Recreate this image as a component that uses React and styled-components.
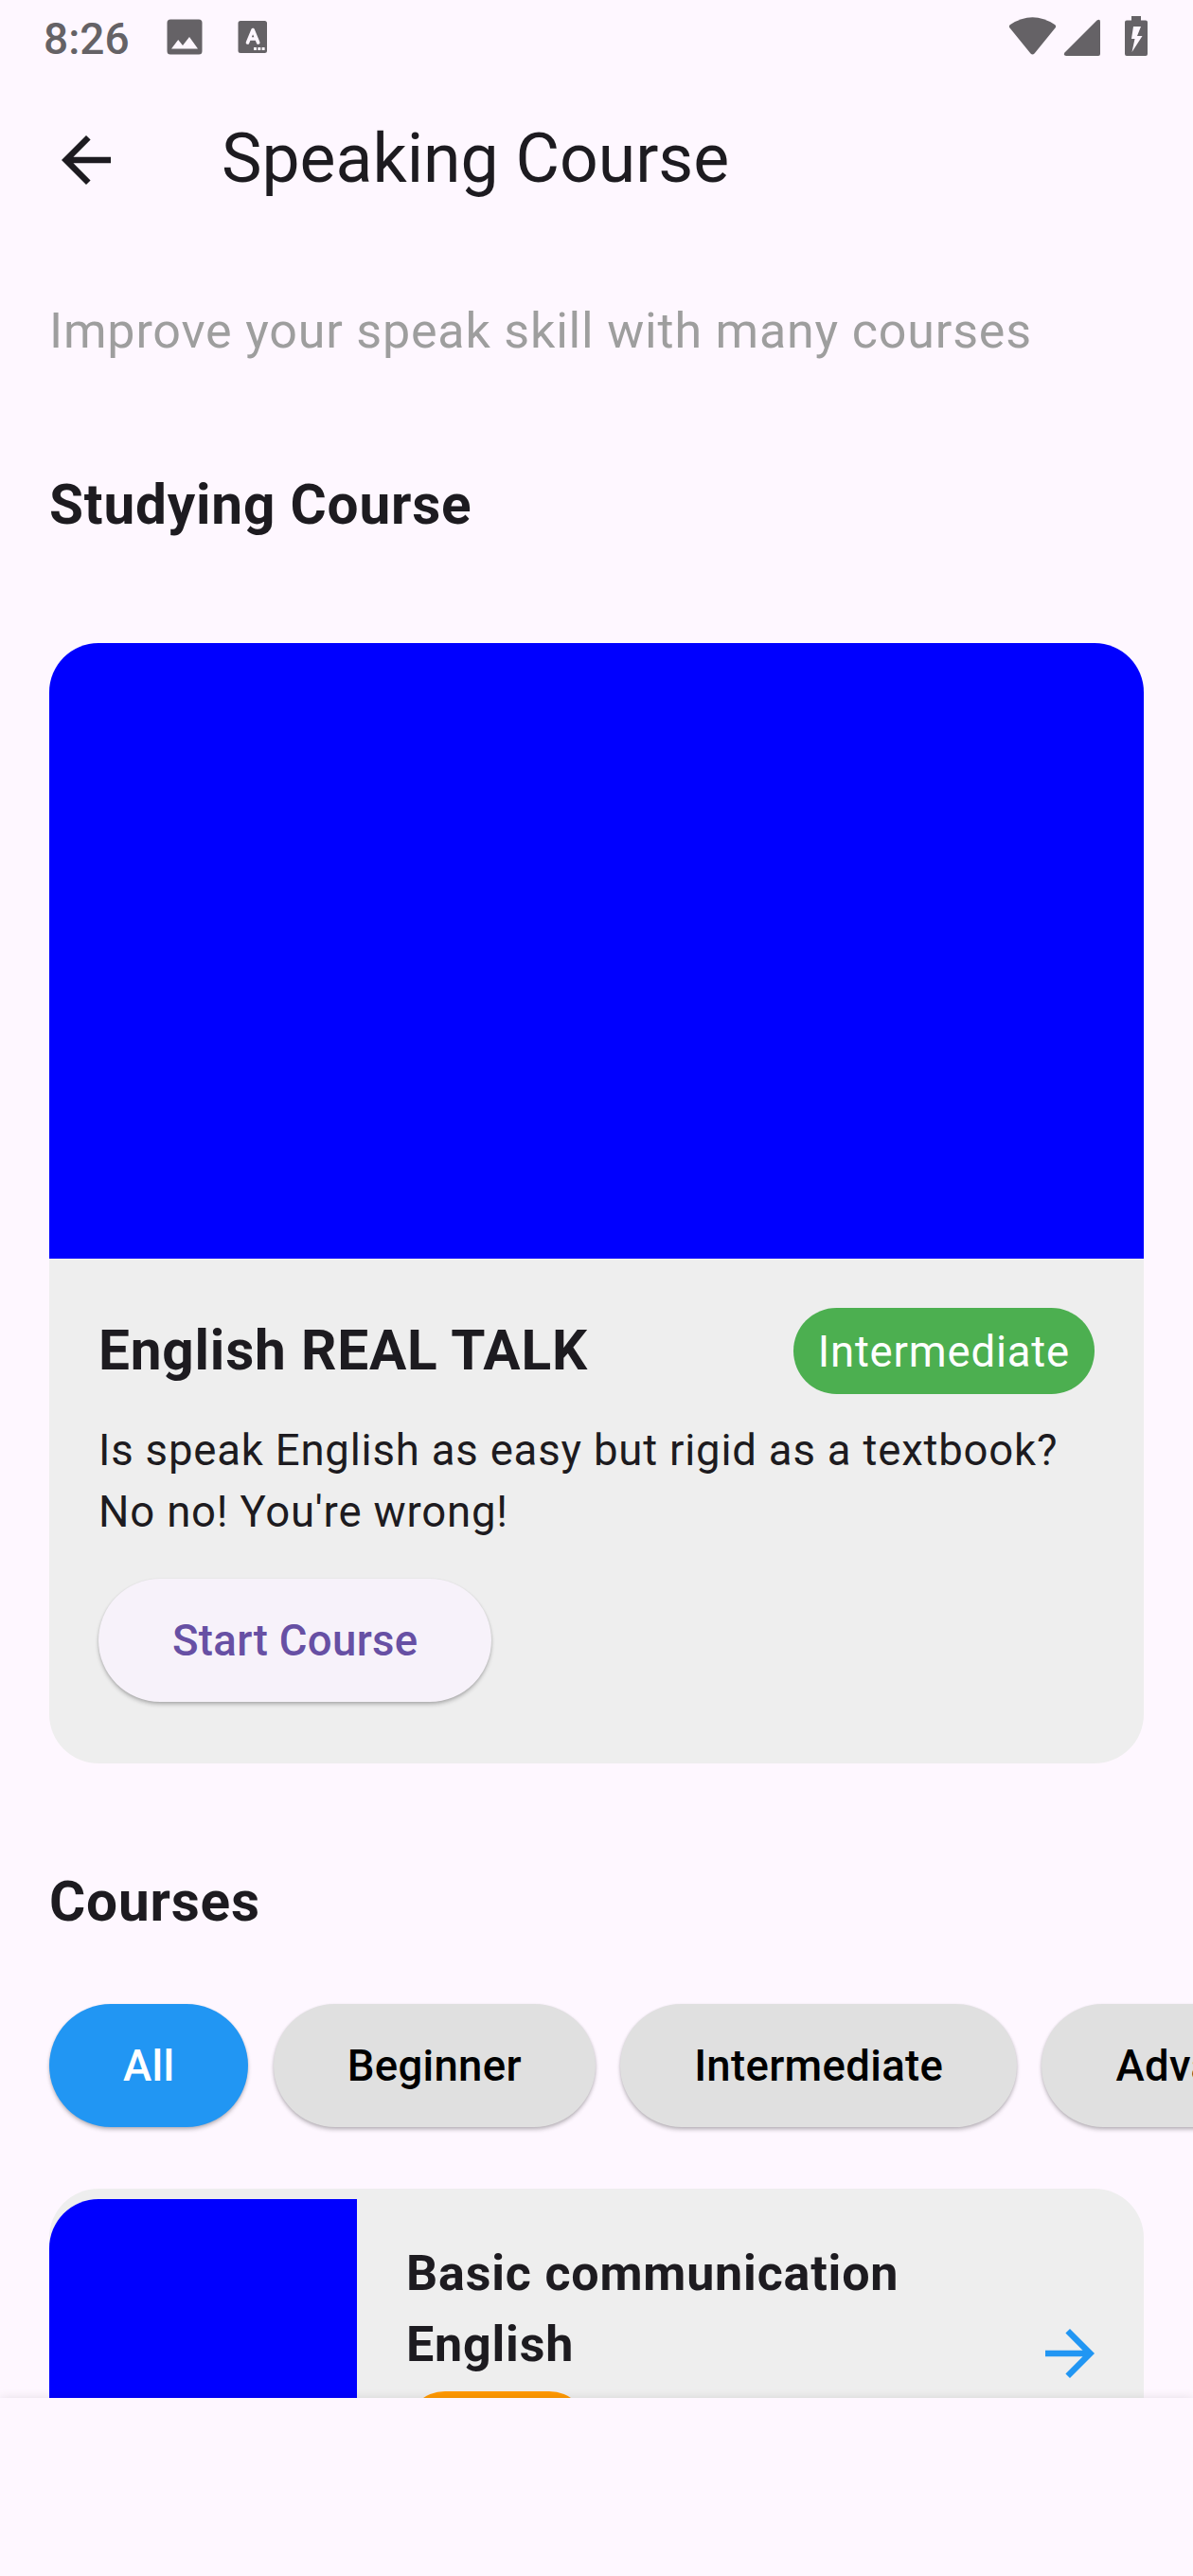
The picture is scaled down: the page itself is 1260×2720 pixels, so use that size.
import React from "react";
import styled, { createGlobalStyle } from "styled-components";

const GlobalStyle = createGlobalStyle`
  *, *::before, *::after { box-sizing: border-box; }
  html, body { margin: 0; padding: 0; background: #fef7ff; }
  body { overflow: hidden; }
`;

const Screen = styled.div`
  width: 1260px;
  height: 2720px;
  display: flex;
  flex-direction: column;
  overflow: hidden;
  background: #fef7ff;
  color: #1d1b20;
  font-family: Roboto, "Liberation Sans", sans-serif;
  font-size: 45.5px;
  line-height: 65px;
  letter-spacing: 0.8125px;
`;

const StatusBar = styled.header`
  flex: none;
  height: 78px;
  padding: 0 46px;
  display: flex;
  justify-content: space-between;
  color: #656266;
`;

const StatusGroup = styled.div`
  display: flex;
  align-items: flex-start;
`;

const Clock = styled.time`
  width: 130px;
  padding-top: 14px;
  font-size: 46px;
  line-height: 54px;
  letter-spacing: 0;
  font-weight: 500;
`;

const StatusIcon = styled.svg`
  display: block;
  flex: none;
  fill: currentColor;
`;

const AppBar = styled.nav`
  flex: none;
  height: 182px;
  padding: 0 52px;
  display: flex;
  align-items: center;
  gap: 104px;
`;

const IconButton = styled.button`
  display: flex;
  padding: 0;
  border: 0;
  background: none;
  color: ${(p) => p.$color || "inherit"};
`;

const Title = styled.h1`
  margin: 0;
  padding-bottom: 3px;
  font-size: 71.5px;
  line-height: 91px;
  font-weight: 400;
  letter-spacing: 0;
`;

const Content = styled.main`
  flex: 1;
  min-height: 0;
  overflow: hidden;
  padding: 52px 52px 0;
`;

const Subtitle = styled.p`
  margin: 0 0 104px;
  padding-top: 1px;
  font-size: 52px;
  line-height: 73.75px;
  color: #9e9e9e;
`;

const SectionTitle = styled.h2`
  margin: 0 0 ${(p) => p.$gap}px;
  font-size: 58.5px;
  line-height: 84.5px;
  font-weight: 700;
`;

const FeaturedCard = styled.article`
  margin-bottom: 104px;
  border-radius: 52px;
  overflow: hidden;
  background: #eeeeee;
`;

const Cover = styled.div`
  height: 650px;
  background: #0000ff;
`;

const FeaturedBody = styled.div`
  padding: 52px 52px 65px;
`;

const FeaturedHead = styled.div`
  display: flex;
  align-items: center;
  justify-content: space-between;
  margin-bottom: 26px;
`;

const FeaturedTitle = styled.h3`
  margin: 0;
  padding-bottom: 2px;
  font-size: 58.5px;
  line-height: 84.5px;
  font-weight: 700;
`;

const Badge = styled.span`
  padding: 14px 26px 12px;
  border-radius: 65px;
  background: #4caf50;
  color: #ffffff;
`;

const Description = styled.p`
  margin: 0 0 38px;
  padding-top: 1px;
`;

const Pill = styled.button`
  flex: none;
  height: 130px;
  padding: 1px 78px 0;
  border: 0;
  border-radius: 65px;
  background: ${(p) => p.$bg};
  color: ${(p) => p.$color};
  font-family: inherit;
  font-size: 45.5px;
  line-height: 65px;
  font-weight: 500;
  letter-spacing: 0.325px;
  white-space: nowrap;
  box-shadow: 0 3px 4px rgba(0, 0, 0, 0.2), 0 1px 3px rgba(0, 0, 0, 0.12);
`;

const FilterRow = styled.div`
  display: flex;
  gap: 26.300px;
  margin: 0 -52px 65px 0;
  padding-top: 13px;
`;

const CourseCard = styled.article`
  height: 347.75px;
  padding-right: 39px;
  display: flex;
  align-items: center;
  border-radius: 52px;
  background: #eeeeee;
`;

const Thumbnail = styled.div`
  flex: none;
  width: 325px;
  height: 325px;
  border-radius: 52px 0 0 52px;
  background: #0000ff;
`;

const CourseInfo = styled.div`
  flex: 1;
  padding: 0 52px;
`;

const CourseName = styled.h3`
  margin: 0 0 12px;
  padding-top: 1px;
  font-size: 52px;
  line-height: 74.75px;
  font-weight: 700;
`;

const LevelTag = styled.div`
  width: 192px;
  height: 81.25px;
  border-radius: 41px;
  background: #ff9800;
`;

const BottomBar = styled.footer`
  flex: none;
  height: 188.5px;
  background: #fef7ff;
  box-shadow: 0 0 10px rgba(0, 0, 0, 0.1);
`;

const FILTERS = ["All", "Beginner", "Intermediate", "Advanced"];

export default function App() {
  return (
    <>
      <GlobalStyle />
      <Screen>
        <StatusBar>
          <StatusGroup>
            <Clock>8:26</Clock>
            <StatusIcon width="120" height="78" viewBox="176 0 120 78">
              <path
                fillRule="evenodd"
                d="M180 20.500h30q3.500 0 3.500 3.500v30q0 3.500-3.500 3.500h-30q-3.500 0-3.500-3.500v-30q0-3.500 3.500-3.500zM181 51.500h28l-9-12.500-7 9-4.800-6z"
              />
              <path
                fillRule="evenodd"
                d="M254 22h25.500q2.500 0 2.500 2.500v29q0 2.500-2.500 2.500h-25.500q-2.500 0-2.500-2.500v-29q0-2.500 2.500-2.500zM268 50v3h3v-3zM272.300 50v3h3v-3zM276.600 50v3h3v-3z"
              />
              <path d="M261.500 45l5.600-13.500 5.600 13.500M263.500 41h7.200" fill="none" stroke="#fef7ff" strokeWidth="3.600" strokeLinecap="round" strokeLinejoin="round" />
            </StatusIcon>
          </StatusGroup>
          <StatusIcon width="150" height="78" viewBox="1064 0 150 78">
            <path d="M1067 26Q1090.500 10.500 1114 26Q1116 27.500 1114.500 29.500L1092.500 56.500Q1090.500 58.500 1088.500 56.500L1066.500 29.500Q1065 27.500 1067 26Z" />
            <path d="M1158.500 21.500Q1162 19.500 1162 23V57Q1162 59 1160 59H1126Q1122.500 58.500 1124.500 55.500Z" />
            <path
              fillRule="evenodd"
              d="M1195 17h10v4.500h5q2 0 2 2v33.500q0 2-2 2h-20q-2 0-2-2v-33.500q0-2 2-2h5zM1197 28l-2 13h3.500l-3 14 11-17h-5.500l4-10z"
            />
          </StatusIcon>
        </StatusBar>
        <AppBar>
          <IconButton aria-label="Back">
            <StatusIcon width="78" height="78" viewBox="0 0 24 24">
              <path d="M20 11H7.830l5.590-5.590L12 4l-8 8 8 8 1.410-1.410L7.830 13H20z" />
            </StatusIcon>
          </IconButton>
          <Title>Speaking Course</Title>
        </AppBar>
        <Content>
          <Subtitle>Improve your speak skill with many courses</Subtitle>
          <SectionTitle $gap={104}>Studying Course</SectionTitle>
          <FeaturedCard>
            <Cover />
            <FeaturedBody>
              <FeaturedHead>
                <FeaturedTitle>English REAL TALK</FeaturedTitle>
                <Badge>Intermediate</Badge>
              </FeaturedHead>
              <Description>Is speak English as easy but rigid as a textbook? No no! You're wrong!</Description>
              <Pill $bg="#f7f2fa" $color="#6750a4">Start Course</Pill>
            </FeaturedBody>
          </FeaturedCard>
          <SectionTitle $gap={52}>Courses</SectionTitle>
          <FilterRow>
            {FILTERS.map((name, i) => (
              <Pill key={name} $bg={i === 0 ? "#2196f3" : "#e0e0e0"} $color={i === 0 ? "#ffffff" : "#000000"}>
                {name}
              </Pill>
            ))}
          </FilterRow>
          <CourseCard>
            <Thumbnail />
            <CourseInfo>
              <CourseName>Basic communication English</CourseName>
              <LevelTag />
            </CourseInfo>
            <IconButton $color="#2196f3" aria-label="Open course">
              <StatusIcon width="78" height="78" viewBox="0 0 24 24">
                <path d="M12 4l-1.410 1.410L16.170 11H4v2h12.170l-5.580 5.590L12 20l8-8z" />
              </StatusIcon>
            </IconButton>
          </CourseCard>
        </Content>
        <BottomBar />
      </Screen>
    </>
  );
}
